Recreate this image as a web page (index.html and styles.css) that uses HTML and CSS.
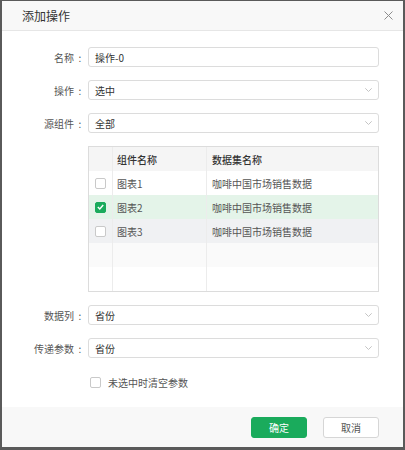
FILE: index.html
```html
<!DOCTYPE html>
<html lang="zh-CN">
<head>
    <meta charset="UTF-8">
    <meta name="viewport" content="width=device-width, initial-scale=1.0">
    <title>添加操作</title>
    <link rel="stylesheet" href="styles.css">
</head>
<body>
    <div class="dialog">
        <div class="dialog-header">
            <span class="dialog-title">添加操作</span>
            <svg class="close" width="9" height="9" viewBox="0 0 9 9">
                <path d="M0.5 0.5 L8.5 8.5 M8.5 0.5 L0.5 8.5" stroke="#8c8c8c" stroke-width="1" fill="none"/>
            </svg>
        </div>

        <div class="dialog-body">
            <div class="form-row">
                <label class="form-label">名称</label>
                <div class="field">操作-0</div>
            </div>
            <div class="form-row">
                <label class="form-label">操作</label>
                <div class="field select">选中
                    <svg class="arrow" width="7" height="4" viewBox="0 0 7 4"><path d="M0.3 0.3 L3.5 3.5 L6.7 0.3" stroke="#c4c4c4" fill="none"/></svg>
                </div>
            </div>
            <div class="form-row">
                <label class="form-label">源组件</label>
                <div class="field select">全部
                    <svg class="arrow" width="7" height="4" viewBox="0 0 7 4"><path d="M0.3 0.3 L3.5 3.5 L6.7 0.3" stroke="#c4c4c4" fill="none"/></svg>
                </div>
            </div>

            <div class="form-row">
                <div class="form-label empty"></div>
                <div class="table">
                    <div class="tr th">
                        <div class="td"></div>
                        <div class="td">组件名称</div>
                        <div class="td">数据集名称</div>
                    </div>
                    <div class="tr">
                        <div class="td"><span class="check"></span></div>
                        <div class="td">图表1</div>
                        <div class="td">咖啡中国市场销售数据</div>
                    </div>
                    <div class="tr selected">
                        <div class="td"><span class="check checked">
                            <svg width="7" height="6" viewBox="0 0 7 6"><path d="M0.8 3 L2.8 5 L6.2 1" stroke="#fff" stroke-width="1.4" fill="none"/></svg>
                        </span></div>
                        <div class="td">图表2</div>
                        <div class="td">咖啡中国市场销售数据</div>
                    </div>
                    <div class="tr hover">
                        <div class="td"><span class="check"></span></div>
                        <div class="td">图表3</div>
                        <div class="td">咖啡中国市场销售数据</div>
                    </div>
                    <div class="tr stripe">
                        <div class="td"></div>
                        <div class="td"></div>
                        <div class="td"></div>
                    </div>
                    <div class="tr">
                        <div class="td"></div>
                        <div class="td"></div>
                        <div class="td"></div>
                    </div>
                </div>
            </div>

            <div class="form-row">
                <label class="form-label">数据列</label>
                <div class="field select">省份
                    <svg class="arrow" width="7" height="4" viewBox="0 0 7 4"><path d="M0.3 0.3 L3.5 3.5 L6.7 0.3" stroke="#c4c4c4" fill="none"/></svg>
                </div>
            </div>
            <div class="form-row">
                <label class="form-label">传递参数</label>
                <div class="field select">省份
                    <svg class="arrow" width="7" height="4" viewBox="0 0 7 4"><path d="M0.3 0.3 L3.5 3.5 L6.7 0.3" stroke="#c4c4c4" fill="none"/></svg>
                </div>
            </div>
            <div class="form-row option-row">
                <div class="form-label empty"></div>
                <label class="option"><span class="check"></span>未选中时清空参数</label>
            </div>
        </div>

        <div class="dialog-footer">
            <button class="btn btn-primary">确定</button>
            <button class="btn">取消</button>
        </div>
    </div>
</body>
</html>
```

FILE: styles.css
```css
body {
    margin: 0;
    padding: 1px 2px 3px 2px;
    background-color: #5a5a5a;
    font-family: "Noto Sans CJK SC", "Noto Sans", sans-serif;
    font-size: 10px;
    color: #333;
}

.dialog {
    height: 446px;
    background: white;
    display: flex;
    flex-direction: column;
}

.dialog-header {
    height: 29px;
    background: #f8f8f8;
    border-bottom: 1px solid #e6e6e6;
    display: flex;
    align-items: center;
    justify-content: space-between;
    padding: 0 10px 0 20px;
}

.dialog-title {
    font-size: 12px;
    color: #333;
}

.close {
    display: block;
}

.dialog-body {
    flex: 1;
    padding: 16px 24px 0 0;
    display: flex;
    flex-direction: column;
    gap: 13px;
}

.form-row {
    display: flex;
    align-items: center;
}

.form-label {
    width: 84px;
    flex: none;
    text-align: right;
    color: #555;
    margin-right: 2px;
    white-space: nowrap;
}

.form-label::after {
    content: ":";
    display: inline-block;
    width: 12px;
    text-align: center;
}

.form-label.empty::after {
    content: none;
}

.field {
    flex: 1;
    height: 18px;
    border: 1px solid #dcdcdc;
    border-radius: 3px;
    padding: 0 6px;
    display: flex;
    align-items: center;
    justify-content: space-between;
    color: #333;
}

.field .arrow {
    display: block;
}

.table {
    flex: 1;
    border: 1px solid #dcdcdc;
}

.tr {
    display: grid;
    grid-template-columns: 23px 94px 1fr;
    height: 24px;
    background: white;
}

.td {
    display: flex;
    align-items: center;
    padding-left: 4px;
    border-left: 1px solid #ececec;
    color: #555;
}

.td:first-child {
    border-left: none;
    padding-left: 0;
    justify-content: center;
}

.td:last-child {
    padding-left: 5px;
}

.th {
    background: #f5f5f5;
}

.th .td {
    color: #333;
    font-weight: 500;
}

.selected {
    background: #e4f4e9;
}

.hover {
    background: #f0f1f3;
}

.stripe {
    background: #fafafa;
}

.check {
    width: 9px;
    height: 9px;
    border: 1px solid #c9c9c9;
    border-radius: 2px;
    background: white;
    display: inline-flex;
    align-items: center;
    justify-content: center;
}

.check.checked {
    background: #1aab5c;
    border-color: #1aab5c;
}

.check svg {
    display: block;
}

.option-row {
    margin-top: 4px;
}

.option {
    display: flex;
    align-items: center;
    color: #555;
    margin-left: 2px;
}

.option .check {
    margin-right: 7px;
}

.dialog-footer {
    height: 40px;
    background: #f8f8f8;
    display: flex;
    align-items: center;
    justify-content: flex-end;
    padding-right: 24px;
    gap: 16px;
}

.btn {
    width: 56px;
    height: 21px;
    border: 1px solid #d6d6d6;
    border-radius: 3px;
    background: white;
    color: #555;
    font-family: inherit;
    font-size: 10px;
    padding: 0;
    cursor: pointer;
}

.btn-primary {
    background: #1aab5c;
    border-color: #1aab5c;
    color: white;
}
```
